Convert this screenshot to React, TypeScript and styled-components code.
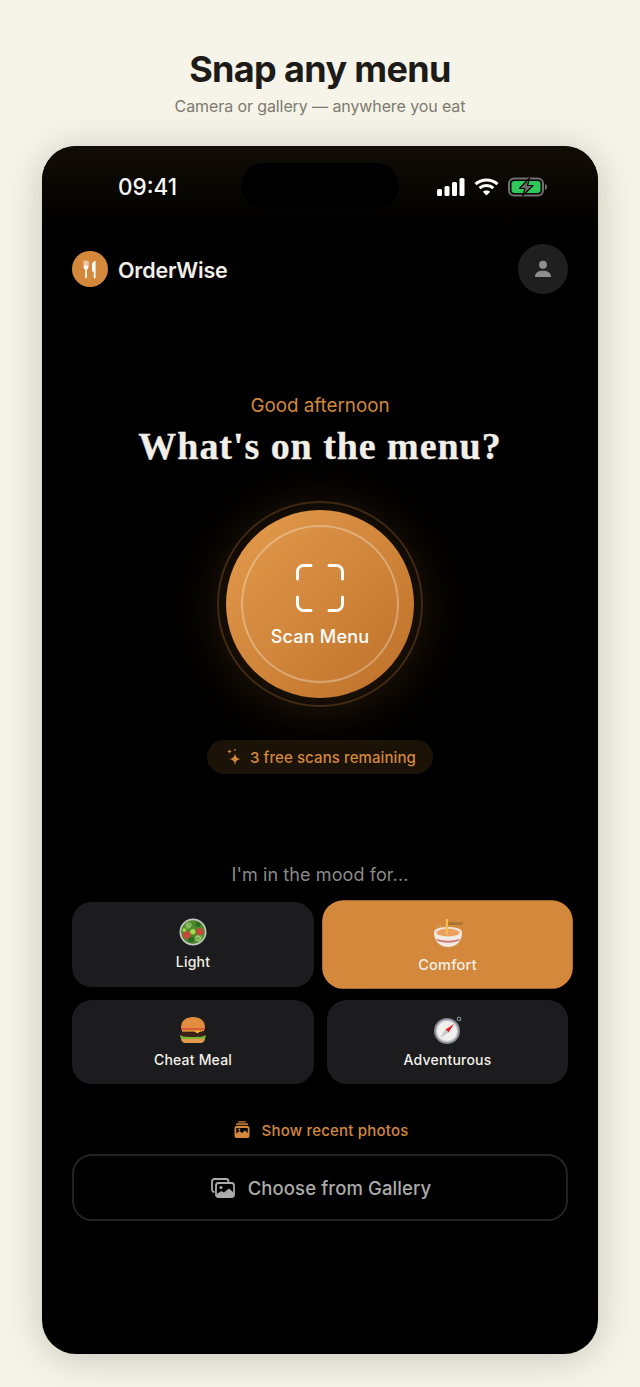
import { FC, ReactNode } from 'react'
import styled, { createGlobalStyle } from 'styled-components'

const ACCENT = '#d4883c'

const GlobalStyle = createGlobalStyle`
  html, body {
    margin: 0;
    padding: 0;
    background: #f6f4e9;
  }
  * {
    box-sizing: border-box;
  }
`

const Page = styled.div`
  width: 640px;
  height: 1387px;
  overflow: hidden;
  display: flex;
  flex-direction: column;
  align-items: center;
  font-family: Inter, 'Liberation Sans', sans-serif;
  background: #f6f4e9;
`

const Headline = styled.h1`
  margin: 47px 0 0;
  font-size: 36px;
  line-height: 44px;
  font-weight: 700;
  letter-spacing: -0.65px;
  color: #1c1b18;
`

const Subline = styled.p`
  margin: 4px 0 0;
  font-size: 16px;
  line-height: 22px;
  letter-spacing: -0.1px;
  color: #7d7a70;
`

const Phone = styled.div`
  position: relative;
  margin-top: 29px;
  width: 556px;
  height: 1208px;
  flex: none;
  border-radius: 34px;
  overflow: hidden;
  background: #000;
  box-shadow: 0 4px 36px rgba(60, 50, 30, 0.25);
  display: flex;
  flex-direction: column;
`

const StatusBar = styled.div`
  height: 82px;
  flex: none;
  padding: 24px 50px 0 76px;
  display: flex;
  justify-content: space-between;
  align-items: flex-start;
  background: linear-gradient(180deg, #110c05 0%, #0a0703 50%, #000 100%);
`

const Island = styled.div`
  position: absolute;
  top: 17px;
  left: 199px;
  width: 158px;
  height: 46px;
  border-radius: 23px;
  background: #000;
`

const Time = styled.span`
  font-size: 22.5px;
  line-height: 34px;
  font-weight: 500;
  color: #f7f7f5;
`

const StatusIcons = styled.div`
  display: flex;
  align-items: center;
  gap: 9px;
  height: 34px;
`

const Header = styled.header`
  margin-top: 16px;
  padding: 0 30px;
  display: flex;
  align-items: center;
  justify-content: space-between;
`

const Brand = styled.div`
  display: flex;
  align-items: center;
  gap: 10px;
`

const LogoBadge = styled.div`
  width: 36px;
  height: 36px;
  border-radius: 50%;
  background: ${ACCENT};
  display: flex;
  align-items: center;
  justify-content: center;
`

const BrandName = styled.span`
  padding-top: 1px;
  font-size: 21.5px;
  font-weight: 600;
  letter-spacing: -0.2px;
  color: #f2efe8;
`

const Avatar = styled.div`
  width: 50px;
  height: 50px;
  border-radius: 50%;
  background: #1f1f20;
  display: flex;
  align-items: center;
  justify-content: center;
`

const Greeting = styled.div`
  margin-top: 99px;
  text-align: center;
  font-size: 18.8px;
  line-height: 26px;
  color: ${ACCENT};
`

const Question = styled.h2`
  margin: 4px 0 0;
  text-align: center;
  font-family: 'Liberation Serif', 'DejaVu Serif', serif;
  font-size: 38px;
  line-height: 46px;
  font-weight: 700;
  letter-spacing: 0.95px;
  -webkit-text-stroke: 0.3px #f2efe8;
  color: #f2efe8;
`

const ScanArea = styled.div`
  margin-top: 32px;
  display: flex;
  justify-content: center;
`

const OuterRing = styled.div`
  width: 206px;
  height: 206px;
  border-radius: 50%;
  border: 2px solid rgba(212, 136, 60, 0.25);
  display: flex;
  align-items: center;
  justify-content: center;
`

const ScanButton = styled.div`
  width: 188px;
  height: 188px;
  flex: none;
  border-radius: 50%;
  background: linear-gradient(135deg, #e49c4e 0%, #bd7028 100%);
  box-shadow: 0 4px 60px rgba(212, 136, 60, 0.24);
  display: flex;
  align-items: center;
  justify-content: center;
`

const InnerRing = styled.div`
  width: 158px;
  height: 158px;
  border-radius: 50%;
  border: 2px solid rgba(255, 255, 255, 0.3);
  display: flex;
  flex-direction: column;
  align-items: center;
  justify-content: flex-start;
  padding-top: 37px;
`

const ScanLabel = styled.span`
  margin-top: 13px;
  font-size: 18px;
  line-height: 24px;
  font-weight: 500;
  letter-spacing: 0.2px;
  color: #fff;
`

const Pill = styled.div`
  align-self: center;
  margin-top: 33px;
  height: 34px;
  width: 226px;
  padding-left: 2px;
  border-radius: 17px;
  background: rgba(212, 136, 60, 0.13);
  display: flex;
  align-items: center;
  justify-content: center;
  gap: 8px;
  font-size: 15px;
  font-weight: 450;
  letter-spacing: 0.1px;
  color: ${ACCENT};
`

const MoodTitle = styled.div`
  margin-top: 88px;
  text-align: center;
  font-size: 18px;
  line-height: 26px;
  letter-spacing: 0.1px;
  color: #8a8a88;
`

const MoodGrid = styled.div`
  margin-top: 14px;
  padding: 0 30px;
  display: grid;
  grid-template-columns: 242px 241px;
  justify-content: space-between;
  row-gap: 13px;
`

const MoodCard = styled.div<{ $active?: boolean }>`
  height: 84.5px;
  border-radius: 20px;
  background: ${({ $active }) => ($active ? ACCENT : '#1c1c1e')};
  transform: ${({ $active }) => ($active ? 'scale(1.04)' : 'none')};
  display: flex;
  flex-direction: column;
  align-items: center;
  padding-top: 16px;
  gap: 6px;
`

const MoodName = styled.span`
  font-size: 14px;
  line-height: 20px;
  font-weight: 450;
  letter-spacing: 0.2px;
  color: #f2f0ea;
`

const RecentLink = styled.div`
  margin-top: 33px;
  display: flex;
  justify-content: center;
  align-items: center;
  gap: 12px;
  height: 26px;
  padding-left: 2px;
  font-size: 15px;
  font-weight: 450;
  letter-spacing: 0.2px;
  color: ${ACCENT};
`

const GalleryButton = styled.div`
  margin: 11px 30px 0;
  height: 67px;
  padding-left: 2px;
  border-radius: 20px;
  border: 2px solid #222224;
  display: flex;
  align-items: center;
  justify-content: center;
  gap: 13px;
  font-size: 18.5px;
  font-weight: 500;
  letter-spacing: 0.1px;
  color: #ababa9;
`

const SignalIcon: FC = () => (
  <svg width="28" height="18" viewBox="0 0 28 18" fill="#fff">
    <rect x="0" y="11" width="5" height="7" rx="1.5" />
    <rect x="7.5" y="8" width="5" height="10" rx="1.5" />
    <rect x="15" y="4" width="5" height="14" rx="1.5" />
    <rect x="22.5" y="0" width="5" height="18" rx="1.5" />
  </svg>
)

const WifiIcon: FC = () => (
  <svg width="25" height="18" viewBox="0 0 25 18" fill="none" stroke="#fff" strokeWidth="3">
    <path d="M1.5 6.2 C7.5 0.6 17.5 0.6 23.5 6.2" />
    <path d="M5.6 10.2 C9.5 6.6 15.5 6.6 19.4 10.2" />
    <path d="M12.5 17.6 L8.8 13.8 C10.8 12 14.2 12 16.2 13.8 Z" fill="#fff" stroke="none" />
  </svg>
)

const BatteryIcon: FC = () => (
  <svg width="40" height="20" viewBox="0 0 40 20">
    <rect x="1" y="1.5" width="34" height="17" rx="5" fill="none" stroke="#6f6f6f" strokeWidth="2" />
    <rect x="3.5" y="4" width="29" height="12" rx="3" fill="#30c85a" />
    <path d="M37 7 C38.6 7.5 39 8.5 39 10 C39 11.5 38.6 12.5 37 13 Z" fill="#6f6f6f" />
    <path
      d="M21.5 1 L11.5 11.5 H17 L14.5 19 L25 8.5 H19.5 Z"
      fill="#6d6d6d"
      stroke="#0c0905"
      strokeWidth="1.2"
      strokeLinejoin="round"
    />
  </svg>
)

const CutleryIcon: FC = () => (
  <svg width="16" height="19" viewBox="0 0 20 24" fill="#fff">
    <path d="M2 1 h1.1 v6 h1.2 V1 h1.4 v6 h1.2 V1 H8 v8 c0 1.4-.9 2.4-2 2.8 V23 H4 V11.8 C2.9 11.4 2 10.4 2 9 Z" />
    <path d="M17 1 V23 H14.8 V14.5 H12.5 V7 C12.5 3.5 14.5 1.2 17 1 Z" />
  </svg>
)

const PersonIcon: FC = () => (
  <svg width="18" height="18" viewBox="0 0 18 18" fill="#8e8e8e">
    <circle cx="9" cy="4.8" r="4" />
    <path d="M1 17 C1 12.5 4.5 10.8 9 10.8 C13.5 10.8 17 12.5 17 17 Z" />
  </svg>
)

const ScanIcon: FC = () => (
  <svg width="48" height="48" viewBox="0 0 48 48" fill="none" stroke="#fff" strokeWidth="3" strokeLinecap="round">
    <path d="M1.5 15 V8 C1.5 4 4 1.5 8 1.5 H15" />
    <path d="M33 1.5 H40 C44 1.5 46.5 4 46.5 8 V15" />
    <path d="M46.5 33 V40 C46.5 44 44 46.5 40 46.5 H33" />
    <path d="M15 46.5 H8 C4 46.5 1.5 44 1.5 40 V33" />
  </svg>
)

const SparkleIcon: FC = () => (
  <svg width="16" height="18" viewBox="0 0 16 18" fill={ACCENT}>
    <path d="M9 5 C9.5 9 11 10.5 15 11 C11 11.5 9.5 13 9 17.5 C8.5 13 7 11.5 3 11 C7 10.5 8.5 9 9 5 Z" />
    <path d="M3.5 1 C3.7 2.6 4.4 3.3 6 3.5 C4.4 3.7 3.7 4.4 3.5 6 C3.3 4.4 2.6 3.7 1 3.5 C2.6 3.3 3.3 2.6 3.5 1 Z" />
    <circle cx="9" cy="1.8" r="0.9" />
  </svg>
)

const SaladIcon: FC = () => (
  <svg width="28" height="28" viewBox="0 0 28 28">
    <circle cx="14" cy="14" r="13.5" fill="#c3c6c0" />
    <circle cx="14" cy="14" r="11.8" fill="#4f8a2c" />
    <circle cx="9" cy="8" r="3" fill="#74ad45" />
    <circle cx="19" cy="6.5" r="2.5" fill="#2f6b22" />
    <circle cx="20" cy="20" r="3.5" fill="#75ad45" />
    <circle cx="12" cy="21.5" r="3" fill="#2f6b22" />
    <circle cx="7.7" cy="17" r="3.8" fill="#c9483a" />
    <circle cx="20.7" cy="13.7" r="3.6" fill="#c9483a" />
    <circle cx="13.8" cy="13.7" r="2.6" fill="#a6dc4e" />
    <circle cx="5.3" cy="12" r="1.8" fill="#a6dc4e" />
    <circle cx="10" cy="7" r="2.2" fill="none" stroke="#b9d9a0" strokeWidth="0.7" />
    <circle cx="19" cy="20.5" r="2.4" fill="none" stroke="#c8e3b0" strokeWidth="0.7" />
  </svg>
)

const NoodleIcon: FC = () => (
  <svg width="30" height="30" viewBox="0 0 30 30">
    <path d="M14.5 5 H29 V7.8 H14.5 Z" fill="#a9742f" />
    <path d="M4 8 L4.8 12 M7 7 L7.6 11" stroke="#e3a867" strokeWidth="1" />
    <path d="M1.5 15 H28.5 C28.5 23 23 29 15 29 C7 29 1.5 23 1.5 15 Z" fill="#f3ebe2" />
    <ellipse cx="15" cy="14.5" rx="13.5" ry="5" fill="#efe2d2" />
    <ellipse cx="15" cy="15" rx="11" ry="3.6" fill="#ed9f5f" />
    <path d="M12.8 2 H15 V17 H12.8 Z" fill="#eec04e" />
    <path d="M3.6 21 C10 23.5 20 23.5 26.4 21 L25.4 23 C19.5 25.5 10.5 25.5 4.6 23 Z" fill="#cf7b78" />
  </svg>
)

const BurgerIcon: FC = () => (
  <svg width="28" height="28" viewBox="0 0 28 28">
    <path d="M2 22 H26 C26 25.5 24 27 21.5 27 H6.5 C4 27 2 25.5 2 22 Z" fill="#e29a50" />
    <path d="M1 19 C6 21.5 22 21.5 27 19 L26 23 H2 Z" fill="#79b636" />
    <rect x="2" y="14" width="24" height="6.5" rx="3" fill="#3a2016" />
    <path d="M3 13.5 H25 V15 C22 15.5 20 15.5 18.5 17.5 L15.5 15.5 H3 Z" fill="#f6c12e" />
    <rect x="2" y="10.5" width="24" height="4" rx="2" fill="#dc5a3c" />
    <path d="M2 11.5 C2 5 7 1 14 1 C21 1 26 5 26 11.5 C26 12 25.5 12 25 12 H3 C2.5 12 2 12 2 11.5 Z" fill="#e28d3e" />
    <circle cx="16" cy="5" r="0.5" fill="#f6d9a8" />
    <circle cx="10" cy="6" r="0.5" fill="#f6d9a8" />
  </svg>
)

const CompassIcon: FC = () => (
  <svg width="28" height="28" viewBox="0 0 28 28">
    <circle cx="25" cy="3" r="1.8" fill="none" stroke="#8a8f96" strokeWidth="1.1" />
    <circle cx="13" cy="15" r="13" fill="#858a91" />
    <circle cx="13" cy="15" r="11.2" fill="#c6c8cb" />
    <circle cx="13" cy="15" r="10" fill="#f1f0ec" />
    <path d="M20 8 L14.5 16.5 L11.5 13.5 Z" fill="#e0222c" />
    <path d="M6 22 L11.5 13.5 L14.5 16.5 Z" fill="#c2c5c9" />
  </svg>
)

const RecentIcon: FC = () => (
  <svg width="16" height="18" viewBox="0 0 16 18" fill={ACCENT}>
    <rect x="4" y="0" width="8" height="1.8" rx="0.8" opacity="0.7" />
    <rect x="2" y="2.3" width="12" height="2" rx="0.8" opacity="0.85" />
    <path
      fillRule="evenodd"
      d="M2.5 5 H13.5 A2 2 0 0 1 15.5 7 V15 A2 2 0 0 1 13.5 17 H2.5 A2 2 0 0 1 .5 15 V7 A2 2 0 0 1 2.5 5 Z M2.3 7 V12.5 L5.3 10 L8 12 L11 9.5 L13.7 12 V7 Z"
    />
    <circle cx="5.3" cy="8.6" r="1.1" />
  </svg>
)

const GalleryIcon: FC = () => (
  <svg width="24" height="20" viewBox="0 0 24 20" fill="none" stroke="#ababa9" strokeWidth="1.8">
    <path d="M3.5 14 C2 14 1 13 1 11.5 V3.5 C1 2 2 1 3.5 1 H15 C16.5 1 17.5 2 17.5 3.5 V4.5" />
    <rect x="5" y="5" width="18" height="14" rx="2.5" />
    <circle cx="10" cy="9.5" r="1.5" fill="#ababa9" stroke="none" />
    <path d="M5.5 16 L10.5 13 L13 14.5 L18 10.5 L22.5 14.5 V17.5 C22.5 18 22 18.5 21 18.5 H7 C6 18.5 5.5 18 5.5 17.5 Z" fill="#ababa9" stroke="none" />
  </svg>
)

interface Mood {
  readonly name: string
  readonly icon: ReactNode
  readonly active?: boolean
}

const moods: ReadonlyArray<Mood> = [
  { name: 'Light', icon: <SaladIcon /> },
  { name: 'Comfort', icon: <NoodleIcon />, active: true },
  { name: 'Cheat Meal', icon: <BurgerIcon /> },
  { name: 'Adventurous', icon: <CompassIcon /> },
]

const App: FC = () => (
  <Page>
    <GlobalStyle />
    <Headline>Snap any menu</Headline>
    <Subline>Camera or gallery — anywhere you eat</Subline>
    <Phone>
      <Island />
      <StatusBar>
        <Time>09:41</Time>
        <StatusIcons>
          <SignalIcon />
          <WifiIcon />
          <BatteryIcon />
        </StatusIcons>
      </StatusBar>
      <Header>
        <Brand>
          <LogoBadge>
            <CutleryIcon />
          </LogoBadge>
          <BrandName>OrderWise</BrandName>
        </Brand>
        <Avatar>
          <PersonIcon />
        </Avatar>
      </Header>
      <Greeting>Good afternoon</Greeting>
      <Question>What's on the menu?</Question>
      <ScanArea>
        <OuterRing>
          <ScanButton>
            <InnerRing>
              <ScanIcon />
              <ScanLabel>Scan Menu</ScanLabel>
            </InnerRing>
          </ScanButton>
        </OuterRing>
      </ScanArea>
      <Pill>
        <SparkleIcon />
        3 free scans remaining
      </Pill>
      <MoodTitle>I'm in the mood for...</MoodTitle>
      <MoodGrid>
        {moods.map(mood => (
          <MoodCard key={mood.name} $active={mood.active}>
            {mood.icon}
            <MoodName>{mood.name}</MoodName>
          </MoodCard>
        ))}
      </MoodGrid>
      <RecentLink>
        <RecentIcon />
        Show recent photos
      </RecentLink>
      <GalleryButton>
        <GalleryIcon />
        Choose from Gallery
      </GalleryButton>
    </Phone>
  </Page>
)

export default App
